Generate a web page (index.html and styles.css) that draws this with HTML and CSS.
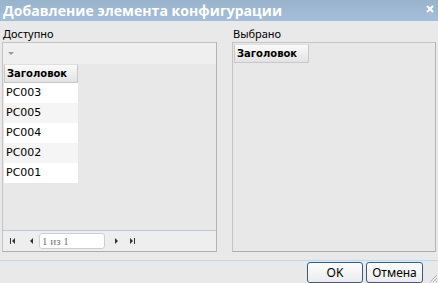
FILE: index.html
```html
<!DOCTYPE html>
<html>
<head>
<meta charset="utf-8">
<link rel="stylesheet" href="styles.css">
</head>
<body>
<div class="window">
  <div class="titlebar">
    <span class="title">Добавление элемента конфигурации</span>
    <svg class="close" width="8" height="8" viewBox="0 0 8 8"><path d="M1 1 L7 7 M7 1 L1 7" stroke="#fff" stroke-width="2"/></svg>
  </div>
  <div class="content">
    <div class="col col-left">
      <div class="label">Доступно</div>
      <div class="panel">
        <div class="toolbar"><span class="arrow"></span></div>
        <div class="grid-area">
          <div class="grid">
            <div class="hdr">Заголовок</div>
            <div class="row">PC003</div>
            <div class="row alt">PC005</div>
            <div class="row">PC004</div>
            <div class="row alt">PC002</div>
            <div class="row">PC001</div>
          </div>
        </div>
        <div class="pager">
          <svg class="pic" width="8" height="8" viewBox="0 0 8 8"><rect x="1" y="1" width="1" height="6" fill="#333"/><path d="M6 1 L3 4 L6 7 Z" fill="#333"/></svg>
          <svg class="pic prev" width="8" height="8" viewBox="0 0 8 8"><path d="M5 1 L2 4 L5 7 Z" fill="#333"/></svg>
          <div class="pinput">1 из 1</div>
          <svg class="pic next" width="8" height="8" viewBox="0 0 8 8"><path d="M3 1 L6 4 L3 7 Z" fill="#333"/></svg>
          <svg class="pic last" width="8" height="8" viewBox="0 0 8 8"><path d="M2 1 L5 4 L2 7 Z" fill="#333"/><rect x="6" y="1" width="1" height="6" fill="#333"/></svg>
        </div>
      </div>
    </div>
    <div class="col col-right">
      <div class="label">Выбрано</div>
      <div class="panel panel-right">
        <div class="hdr hdr-right">Заголовок</div>
      </div>
    </div>
  </div>
  <div class="footer">
    <button class="btn btn-ok">OK</button>
    <button class="btn btn-cancel">Отмена</button>
  </div>
  <svg class="grip" width="10" height="10" viewBox="0 0 10 10">
    <path d="M9 2 L2 9 M9 5 L5 9 M9 8 L8 9" stroke="#b8b8b8" stroke-width="1"/>
  </svg>
</div>
</body>
</html>
```
FILE: styles.css
```css
html, body {
  margin: 0;
  padding: 0;
}
body {
  width: 438px;
  height: 283px;
  overflow: hidden;
  background: #e9e9e9;
  font-family: "Noto Sans", "Open Sans", sans-serif;
}
.window {
  position: relative;
  width: 438px;
  height: 283px;
  display: flex;
  flex-direction: column;
}
.titlebar {
  height: 21px;
  background: linear-gradient(#9ab3cd, #a6bed7);
  display: flex;
  align-items: flex-start;
  justify-content: space-between;
  padding: 0 4px 0 3px;
  box-sizing: border-box;
  color: #fff;
}
.title {
  font-family: "Open Sans", sans-serif;
  font-weight: bold;
  font-size: 14px;
  line-height: 21px;
  letter-spacing: 0.05px;
}
.close {
  margin-top: 5px;
}
.content {
  display: flex;
  padding: 0 2px;
  gap: 15px;
}
.col {
  display: flex;
  flex-direction: column;
}
.col-left { width: 215px; }
.col-right { width: 204px; }
.label {
  height: 21px;
  font-size: 11px;
  line-height: 11px;
  padding: 7px 0 0 1px;
  box-sizing: border-box;
  color: #000;
}
.panel {
  height: 210px;
  border: 1px solid #c4c4c4;
  border-bottom-color: #adadad;
  border-right-color: #b4b4b4;
  box-sizing: border-box;
  display: flex;
  flex-direction: column;
  background: #e8e8e8;
}
.toolbar {
  height: 21px;
  background: #efefef;
  position: relative;
}
.arrow {
  position: absolute;
  left: 5px;
  top: 9px;
  width: 0;
  height: 0;
  border-left: 3px solid transparent;
  border-right: 3px solid transparent;
  border-top: 3px solid #999;
}
.grid-area {
  flex: 1;
  padding-left: 1px;
}
.grid {
  width: 74px;
  font-family: "DejaVu Sans", sans-serif;
}
.hdr {
  height: 19px;
  box-sizing: border-box;
  border: 1px solid #c8c8c8;
  border-top-color: #e0e0e0;
  background: linear-gradient(#fbfbfb, #e2e2e2);
  font-family: "DejaVu Sans", sans-serif;
  font-weight: bold;
  font-size: 10px;
  line-height: 17px;
  padding-left: 2px;
  color: #000;
}
.row {
  height: 20px;
  background: #fff;
  font-size: 11px;
  line-height: 20px;
  padding-left: 2px;
}
.row.alt { background: #f5f5f5; }
.pager {
  height: 20px;
  border-top: 1px solid #b7c8d8;
  background: #eeeeee;
  display: flex;
  align-items: center;
  padding-left: 6px;
}
.pic { display: block; }
.prev { margin-left: 11px; }
.pinput {
  margin-left: 3px;
  width: 66px;
  height: 16px;
  box-sizing: border-box;
  border: 1px solid #cfcfcf;
  border-radius: 3px;
  background: #fff;
  font-family: "Liberation Serif", serif;
  font-size: 11px;
  line-height: 14px;
  padding-left: 2px;
  color: #777;
}
.next { margin-left: 7px; }
.last { margin-left: 8px; }
.panel-right { padding: 1px 0 0 1px; }
.hdr-right { width: 75px; }
.footer {
  margin-top: 8px;
  border-top: 1px solid #c7d6e4;
  flex: 1;
  display: flex;
  justify-content: flex-end;
  align-items: flex-start;
  padding: 1px 15px 0 0;
  gap: 3px;
}
.btn {
  height: 21px;
  border: 1px solid #3f5a78;
  border-radius: 3px;
  background: linear-gradient(#fdfdfd, #ececec);
  font-family: "Noto Sans", sans-serif;
  font-size: 12px;
  padding: 0;
  color: #000;
}
.btn-ok { width: 56px; }
.btn-cancel { width: 57px; }
.grip {
  position: absolute;
  right: 0;
  bottom: 0;
}
```
